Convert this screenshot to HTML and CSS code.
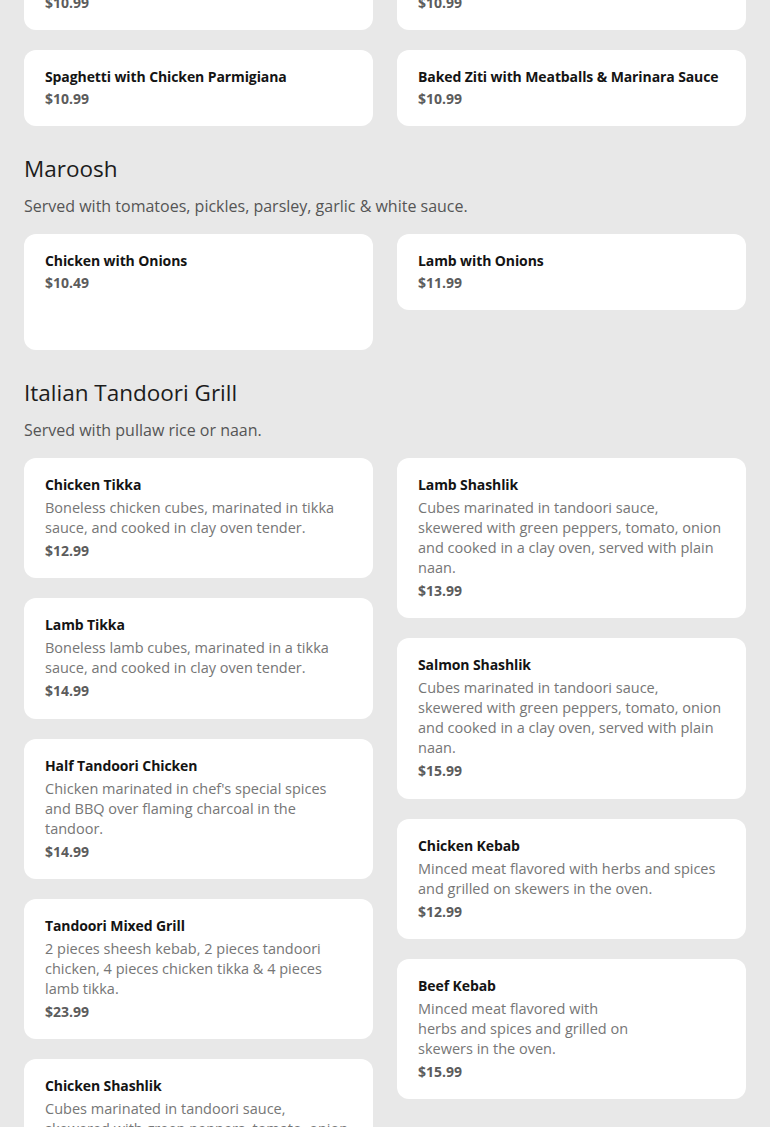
FILE: index.html
```html
<!DOCTYPE html>
<html lang="en">
<head>
<meta charset="utf-8">
<title>Menu</title>
<link rel="stylesheet" href="styles.css">
</head>
<body>
<main class="page">
  <section class="section section-first">
    <div class="columns">
      <div class="col">
        <div class="card"><div class="name">Spaghetti with Meatballs</div><div class="price">$10.99</div></div>
        <div class="card"><div class="name">Spaghetti with Chicken Parmigiana</div><div class="price">$10.99</div></div>
      </div>
      <div class="col">
        <div class="card"><div class="name">Baked Ziti with Marinara Sauce</div><div class="price">$10.99</div></div>
        <div class="card"><div class="name">Baked Ziti with Meatballs &amp; Marinara Sauce</div><div class="price">$10.99</div></div>
      </div>
    </div>
  </section>

  <section class="section">
    <h2 class="sec-title">Maroosh</h2>
    <p class="sec-desc">Served with tomatoes, pickles, parsley, garlic &amp; white sauce.</p>
    <div class="columns">
      <div class="col">
        <div class="card card-tall"><div class="name">Chicken with Onions</div><div class="price">$10.49</div></div>
      </div>
      <div class="col">
        <div class="card"><div class="name">Lamb with Onions</div><div class="price">$11.99</div></div>
      </div>
    </div>
  </section>

  <section class="section">
    <h2 class="sec-title">Italian Tandoori Grill</h2>
    <p class="sec-desc">Served with pullaw rice or naan.</p>
    <div class="columns">
      <div class="col">
        <div class="card"><div class="name">Chicken Tikka</div><div class="desc">Boneless chicken cubes, marinated in tikka sauce, and cooked in clay oven tender.</div><div class="price">$12.99</div></div>
        <div class="card card-plus"><div class="name">Lamb Tikka</div><div class="desc">Boneless lamb cubes, marinated in a tikka sauce, and cooked in clay oven tender.</div><div class="price">$14.99</div></div>
        <div class="card"><div class="name">Half Tandoori Chicken</div><div class="desc">Chicken marinated in chef's special spices and BBQ over flaming charcoal in the tandoor.</div><div class="price">$14.99</div></div>
        <div class="card"><div class="name">Tandoori Mixed Grill</div><div class="desc">2 pieces sheesh kebab, 2 pieces tandoori chicken, 4 pieces chicken tikka &amp; 4 pieces lamb tikka.</div><div class="price">$23.99</div></div>
        <div class="card"><div class="name">Chicken Shashlik</div><div class="desc">Cubes marinated in tandoori sauce, skewered with green peppers, tomato, onion and cooked in a clay oven, served with plain naan.</div><div class="price">$13.99</div></div>
      </div>
      <div class="col">
        <div class="card"><div class="name">Lamb Shashlik</div><div class="desc">Cubes marinated in tandoori sauce, skewered with green peppers, tomato, onion and cooked in a clay oven, served with plain naan.</div><div class="price">$13.99</div></div>
        <div class="card card-plus"><div class="name">Salmon Shashlik</div><div class="desc">Cubes marinated in tandoori sauce, skewered with green peppers, tomato, onion and cooked in a clay oven, served with plain naan.</div><div class="price">$15.99</div></div>
        <div class="card"><div class="name">Chicken Kebab</div><div class="desc">Minced meat flavored with herbs and spices and grilled on skewers in the oven.</div><div class="price">$12.99</div></div>
        <div class="card"><div class="name">Beef Kebab</div><div class="desc desc-narrow">Minced meat flavored with herbs and spices and grilled on skewers in the oven.</div><div class="price">$15.99</div></div>
      </div>
    </div>
  </section>
</main>
</body>
</html>
```

FILE: styles.css
```css
* { box-sizing: border-box; }
html, body { margin: 0; padding: 0; }
body {
  background: #e8e8e8;
  font-family: "Open Sans", "Noto Sans", sans-serif;
  color: #1a1a1a;
  overflow: hidden;
}
.page {
  padding: 0 24px;
  margin-top: -46px;
}
.section { padding-top: 27px; }
.section-first { padding-top: 0; }
.sec-title {
  margin: 0;
  font-size: 22.5px;
  line-height: 32px;
  font-weight: 400;
  color: #1c1c1c;
}
.sec-desc {
  margin: 9px 0 16px;
  font-size: 16px;
  line-height: 24px;
  color: #555;
}
.columns {
  display: flex;
  gap: 24px;
  align-items: flex-start;
}
.col {
  flex: 1 1 0;
  min-width: 0;
  display: flex;
  flex-direction: column;
  gap: 20px;
}
.card {
  background: #fff;
  border-radius: 12px;
  padding: 16px 20px 17px 21px;
}
.card-plus { padding-bottom: 18px; }
.card-tall { min-height: 116px; }
.name {
  font-size: 14px;
  line-height: 20px;
  font-weight: 700;
  letter-spacing: -0.1px;
  color: #141414;
  padding-top: 1px;
  margin-bottom: -1px;
}
.desc {
  margin-top: 4px;
  font-size: 14.5px;
  line-height: 20px;
  color: #767676;
}
.desc-narrow { max-width: 216px; }
.price {
  margin-top: 3px;
  font-size: 14px;
  line-height: 20px;
  font-weight: 700;
  color: #5c5c5c;
}
```
